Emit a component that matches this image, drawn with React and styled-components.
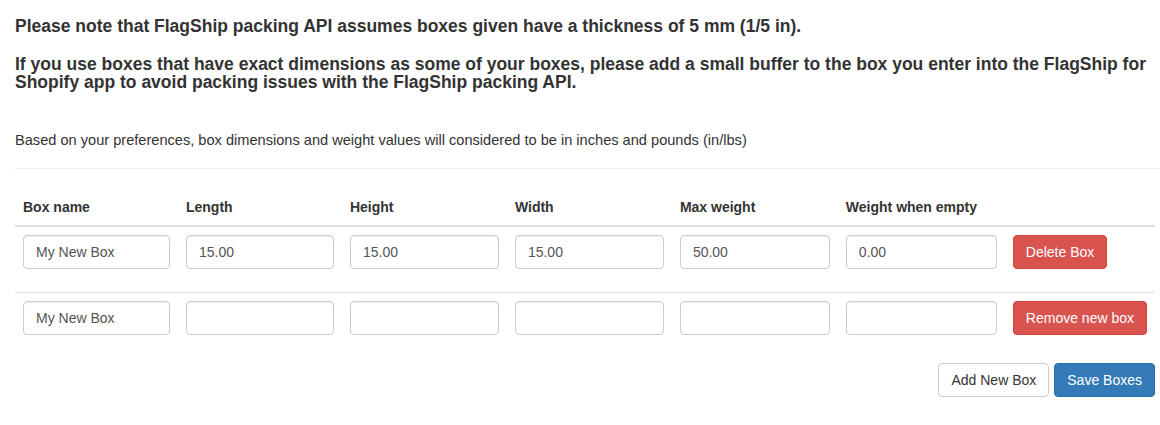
import React from 'react'
import styled, { createGlobalStyle } from 'styled-components';

const GlobalStyle = createGlobalStyle`
  * { box-sizing: border-box; }
  body {
    margin: 0;
    background: #fff;
    font-family: "Liberation Sans", Arial, Helvetica, sans-serif;
    font-size: 14px;
    line-height: 1.42857;
    color: #333;
  }
`

const Page = styled.div`
  padding: 17px 0 20px 15px;
`
const Notice = styled.p`
  margin: 0 5px 20px 0;
  font-size: 17.5px;
  font-weight: bold;
  line-height: 18px;
  color: #333;
`
const Units = styled.p`
  margin: 40px 5px 0 0;
  font-size: 14.6px;
  line-height: 18px;
`
const Hr = styled.hr`
  margin: 19px 0 20px;
  border: 0;
  border-top: 1px solid #eee;
`
const Table = styled.table`
  width: calc(100% - 5px);
  border-collapse: collapse;
  border-spacing: 0;
`
const Th = styled.th`
  width: ${({w}) => w ? `${w}px` : 'auto'};
  padding: 8px;
  text-align: left;
  vertical-align: bottom;
  font-size: 14px;
  font-weight: bold;
  line-height: 20px;
  border-bottom: 2px solid #ddd;
`
const Td = styled.td`
  padding: 8px;
  vertical-align: top;
  border-top: ${({first}) => first ? '0' : '1px solid #ddd'};
`
const Field = styled.div`
  margin-bottom: 15px;
`
const Input = styled.input`
  display: block;
  width: 100%;
  height: 34px;
  padding: 6px 12px;
  font-family: inherit;
  font-size: 14px;
  line-height: 1.42857;
  color: #555;
  background: #fff;
  border: 1px solid #ccc;
  border-radius: 4px;
  box-shadow: inset 0 1px 1px rgba(0,0,0,.075);
  outline: none;
`
const Button = styled.button`
  display: inline-block;
  height: 34px;
  padding: 6px 12px;
  font-family: inherit;
  font-size: 14px;
  line-height: 20px;
  border-radius: 4px;
  cursor: pointer;
  white-space: nowrap;
  color: ${({variant}) => variant === 'default' ? '#333' : '#fff'};
  background: ${({variant}) => variant === 'danger' ? '#d9534f' : variant === 'primary' ? '#337ab7' : '#fff'};
  border: 1px solid ${({variant}) => variant === 'danger' ? '#d43f3a' : variant === 'primary' ? '#2e6da4' : '#ccc'};
`
const Actions = styled.div`
  display: flex;
  justify-content: flex-end;
  gap: 5px;
  margin: 5px 5px 0 0;
`

const columns = [
  { label: 'Box name', w: 163 },
  { label: 'Length', w: 164 },
  { label: 'Height', w: 165 },
  { label: 'Width', w: 165 },
  { label: 'Max weight', w: 166 },
  { label: 'Weight when empty', w: 167 },
]

const rows = [
  { values: ['My New Box', '15.00', '15.00', '15.00', '50.00', '0.00'], action: 'Delete Box' },
  { values: ['My New Box', '', '', '', '', ''], action: 'Remove new box' },
]

export default function App() {
  return (
    <>
      <GlobalStyle />
      <Page>
        <Notice>Please note that FlagShip packing API assumes boxes given have a thickness of 5 mm (1/5 in).</Notice>
        <Notice>If you use boxes that have exact dimensions as some of your boxes, please add a small buffer to the box you enter into the FlagShip for Shopify app to avoid packing issues with the FlagShip packing API.</Notice>
        <Units>Based on your preferences, box dimensions and weight values will considered to be in inches and pounds (in/lbs)</Units>
        <Hr />
        <Table>
          <thead>
            <tr>
              {columns.map(c => <Th key={c.label} w={c.w}>{c.label}</Th>)}
              <Th />
            </tr>
          </thead>
          <tbody>
            {rows.map((r, i) => (
              <tr key={i}>
                {r.values.map((v, j) => (
                  <Td key={j} first={i === 0}>
                    <Field><Input type="text" defaultValue={v} /></Field>
                  </Td>
                ))}
                <Td first={i === 0}><Button variant="danger">{r.action}</Button></Td>
              </tr>
            ))}
          </tbody>
        </Table>
        <Actions>
          <Button variant="default">Add New Box</Button>
          <Button variant="primary">Save Boxes</Button>
        </Actions>
      </Page>
    </>
  )
}
